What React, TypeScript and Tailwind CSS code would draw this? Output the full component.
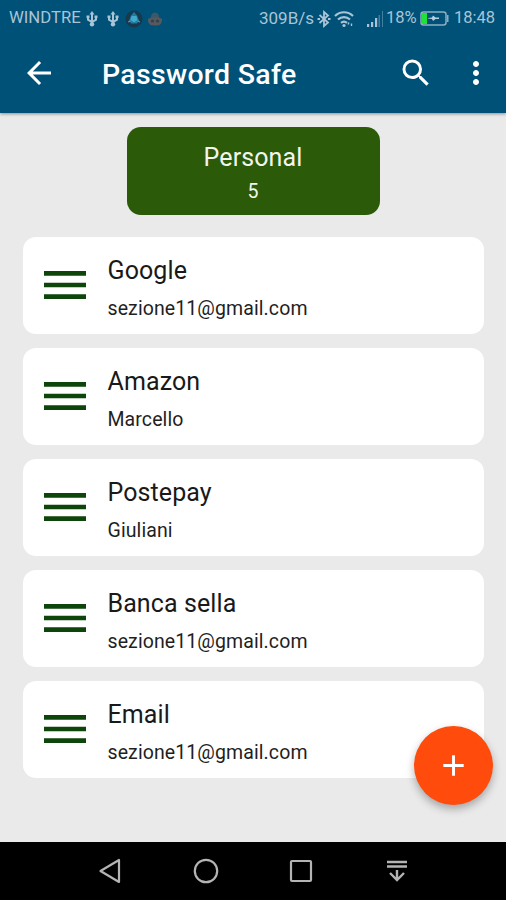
import { MdAdd, MdArrowBack, MdMenu, MdMoreVert, MdSearch } from 'react-icons/md';

interface Entry {
  title: string;
  account: string;
}

const entries: Entry[] = [
  { title: 'Google', account: 'sezione11@gmail.com' },
  { title: 'Amazon', account: 'Marcello' },
  { title: 'Postepay', account: 'Giuliani' },
  { title: 'Banca sella', account: 'sezione11@gmail.com' },
  { title: 'Email', account: 'sezione11@gmail.com' },
];

function UsbIcon() {
  return (
    <svg viewBox="0 0 12 18" className="h-[18px] w-3" fill="none" stroke="currentColor" strokeWidth="2">
      <path d="M6 3v11M2 7v2.700L6 12l4-2.300V7" />
      <path d="M6 1L8.500 4.500h-5z" fill="currentColor" stroke="none" />
      <path d="M0.500 5.500h3v2.500h-3zM8.500 5.500h3v2.500h-3z" fill="currentColor" stroke="none" />
      <circle cx="6" cy="14.300" r="2.200" fill="currentColor" stroke="none" />
    </svg>
  );
}

function StatusBar() {
  return (
    <div className="flex h-[35px] items-center justify-between pl-[9px] pr-[11px] pt-0.5 text-[16.500px] leading-none text-[#a9c4d6]">
      <div className="flex items-center">
        <span className="w-[73px] whitespace-nowrap text-[16.700px]">WINDTRE</span>
        <span className="ml-1"><UsbIcon /></span>
        <span className="ml-[9px]"><UsbIcon /></span>
        <svg viewBox="0 0 18 18" className="ml-1.5 size-[18px]">
          <circle cx="9" cy="9" r="8.500" fill="#17394d" />
          <path d="M9 2l3 3.500 2 5-2 3H6l-2-3 2-5z" fill="#207ba0" />
          <path d="M6.500 6h5l1 4L9 12.500 5.500 10z" fill="#41a9cb" />
          <path d="M3 12l2.500-1M15 12l-2.500-1" stroke="#6f9eb3" strokeWidth="1" />
        </svg>
        <svg viewBox="0 0 16 18" className="ml-1 h-[18px] w-4">
          <path d="M4 7c0-6 8-6 8 0l1 1H3z" fill="#3e5966" />
          <path d="M1 9c3-2 11-2 14 0v2c-1 4-3 4.500-7 4.500S2 15 1 11z" fill="#56595f" />
          <circle cx="5.500" cy="11" r="1.600" fill="#36404a" />
          <circle cx="10.500" cy="11" r="1.600" fill="#36404a" />
        </svg>
      </div>
      <div className="flex items-center">
        <span className="w-[56px] whitespace-nowrap text-[17px]">309B/s</span>
        <svg viewBox="0 0 14 18" className="ml-0.5 h-[18px] w-[14px]" fill="none" stroke="currentColor" strokeWidth="1.800">
          <path d="M2.500 5l8.500 7.500L7 16V2l4 3.500L2.500 13" />
          <path d="M0.500 9h2.500M11 9h2.500" strokeWidth="2" />
        </svg>
        <svg viewBox="0 0 20 18" className="ml-[3px] h-[18px] w-5" fill="none" stroke="currentColor" strokeWidth="2.200">
          <path d="M1 6c5-5 13-5 18 0M4 9.500c3.500-3.300 8.500-3.300 12 0M7 12.800c2-1.700 4-1.700 6 0" />
          <circle cx="10" cy="15.500" r="1.600" fill="currentColor" stroke="none" />
          <path d="M15 12.500l-1 2M17.500 13.500v2.500" strokeWidth="1.400" />
        </svg>
        <svg viewBox="0 0 17 16" className="ml-[13px] h-4 w-[17px]" fill="currentColor">
          <path d="M0 13h2.200v3H0zM4 11h2.200v5H4zM8 7h2.200v9H8z" />
          <path d="M11.500 4h1.500v12h-1.500zM15 0h1v16h-1z" opacity="0.4" />
        </svg>
        <span className="ml-0.5 w-[31px] whitespace-nowrap">18%</span>
        <svg viewBox="0 0 29 15" className="ml-[3px] h-[15px] w-[29px]">
          <rect x="1" y="1" width="25" height="13" rx="2.500" fill="none" stroke="#8fadbf" strokeWidth="1.500" />
          <rect x="2" y="2" width="5" height="11" fill="#1de23c" />
          <path d="M8 7l4-.5 1-2 2.500 2H19v1.500h-3.500l-2.500 2-1-2-4-.500z" fill="#b8d0df" />
          <path d="M27 4h1.500v7H27z" fill="#8fadbf" />
        </svg>
        <span className="ml-[5px] w-[41px] whitespace-nowrap">18:48</span>
      </div>
    </div>
  );
}

function Toolbar() {
  return (
    <div className="flex h-[78px] items-center pb-0.5 pl-[21px] pr-3 text-white">
      <MdArrowBack className="size-9" />
      <h1 className="ml-[45px] flex-1 pt-1 text-[28.500px] font-medium leading-8 tracking-[0.300px]">Password Safe</h1>
      <MdSearch className="size-9" />
      <MdMoreVert className="ml-6 size-9" />
    </div>
  );
}

function EntryCard({ title, account }: Entry) {
  return (
    <li className="flex h-[97px] items-center rounded-[13px] bg-white pl-[14px]">
      <MdMenu className="mb-px size-14 text-[#0d450b]" />
      <div className="ml-[15px] pt-1">
        <div className="text-[25px] leading-8 tracking-[0.1px] text-[#191919]">{title}</div>
        <div className="mt-2.5 text-[19.500px] leading-6 tracking-[0.1px] text-[#1f1f1f]">{account}</div>
      </div>
    </li>
  );
}

function NavBar() {
  return (
    <nav className="flex h-[58px] items-center bg-black pl-[98px] text-[#b4b4b4]">
      <svg viewBox="0 0 24 26" className="h-[26px] w-6" fill="none" stroke="currentColor" strokeWidth="2.200" strokeLinejoin="round">
        <path d="M21 2v22L2.500 13z" />
      </svg>
      <svg viewBox="0 0 26 26" className="ml-[71px] size-[26px]" fill="none" stroke="currentColor" strokeWidth="2.200">
        <circle cx="13" cy="13" r="11.200" />
      </svg>
      <svg viewBox="0 0 24 24" className="ml-[70px] size-6" fill="none" stroke="currentColor" strokeWidth="2.200">
        <rect x="2" y="2" width="20" height="20" rx="1" />
      </svg>
      <svg viewBox="0 0 22 24" className="ml-[73px] h-6 w-[22px]" fill="none" stroke="currentColor" strokeWidth="2.400">
        <path d="M1 3h20M1 7.500h20M11 11v10M4 14l7 7 7-7" />
      </svg>
    </nav>
  );
}

export default function App() {
  return (
    <div className="relative flex h-[900px] w-[506px] flex-col overflow-hidden bg-[#eaeaea] font-['Roboto',sans-serif]">
      <header className="bg-[#005178] shadow-[0_1px_3px_rgba(0,0,0,0.4)]">
        <StatusBar />
        <Toolbar />
      </header>

      <main className="flex flex-1 flex-col items-center pt-3.5">
        {/* Category */}
        <div className="flex h-[88px] w-[253px] flex-col items-center rounded-[14px] bg-[#2b5a09] pt-[15px] text-[#f2f5ef]">
          <div className="text-[25px] leading-8 tracking-[0.1px]">Personal</div>
          <div className="mt-1.5 text-[19.500px] leading-6">5</div>
        </div>

        <ul className="mt-[22px] flex w-[461px] flex-col gap-3.5">
          {entries.map((entry) => (
            <EntryCard key={entry.title} {...entry} />
          ))}
        </ul>
      </main>

      <NavBar />

      {/* Floating add button */}
      <button
        aria-label="Add"
        className="absolute left-[414px] top-[726px] flex size-[79px] items-center justify-center rounded-full bg-[#ff4b0b] text-white shadow-[0_4px_8px_rgba(0,0,0,0.3)]"
      >
        <MdAdd className="size-[35px]" />
      </button>
    </div>
  );
}
